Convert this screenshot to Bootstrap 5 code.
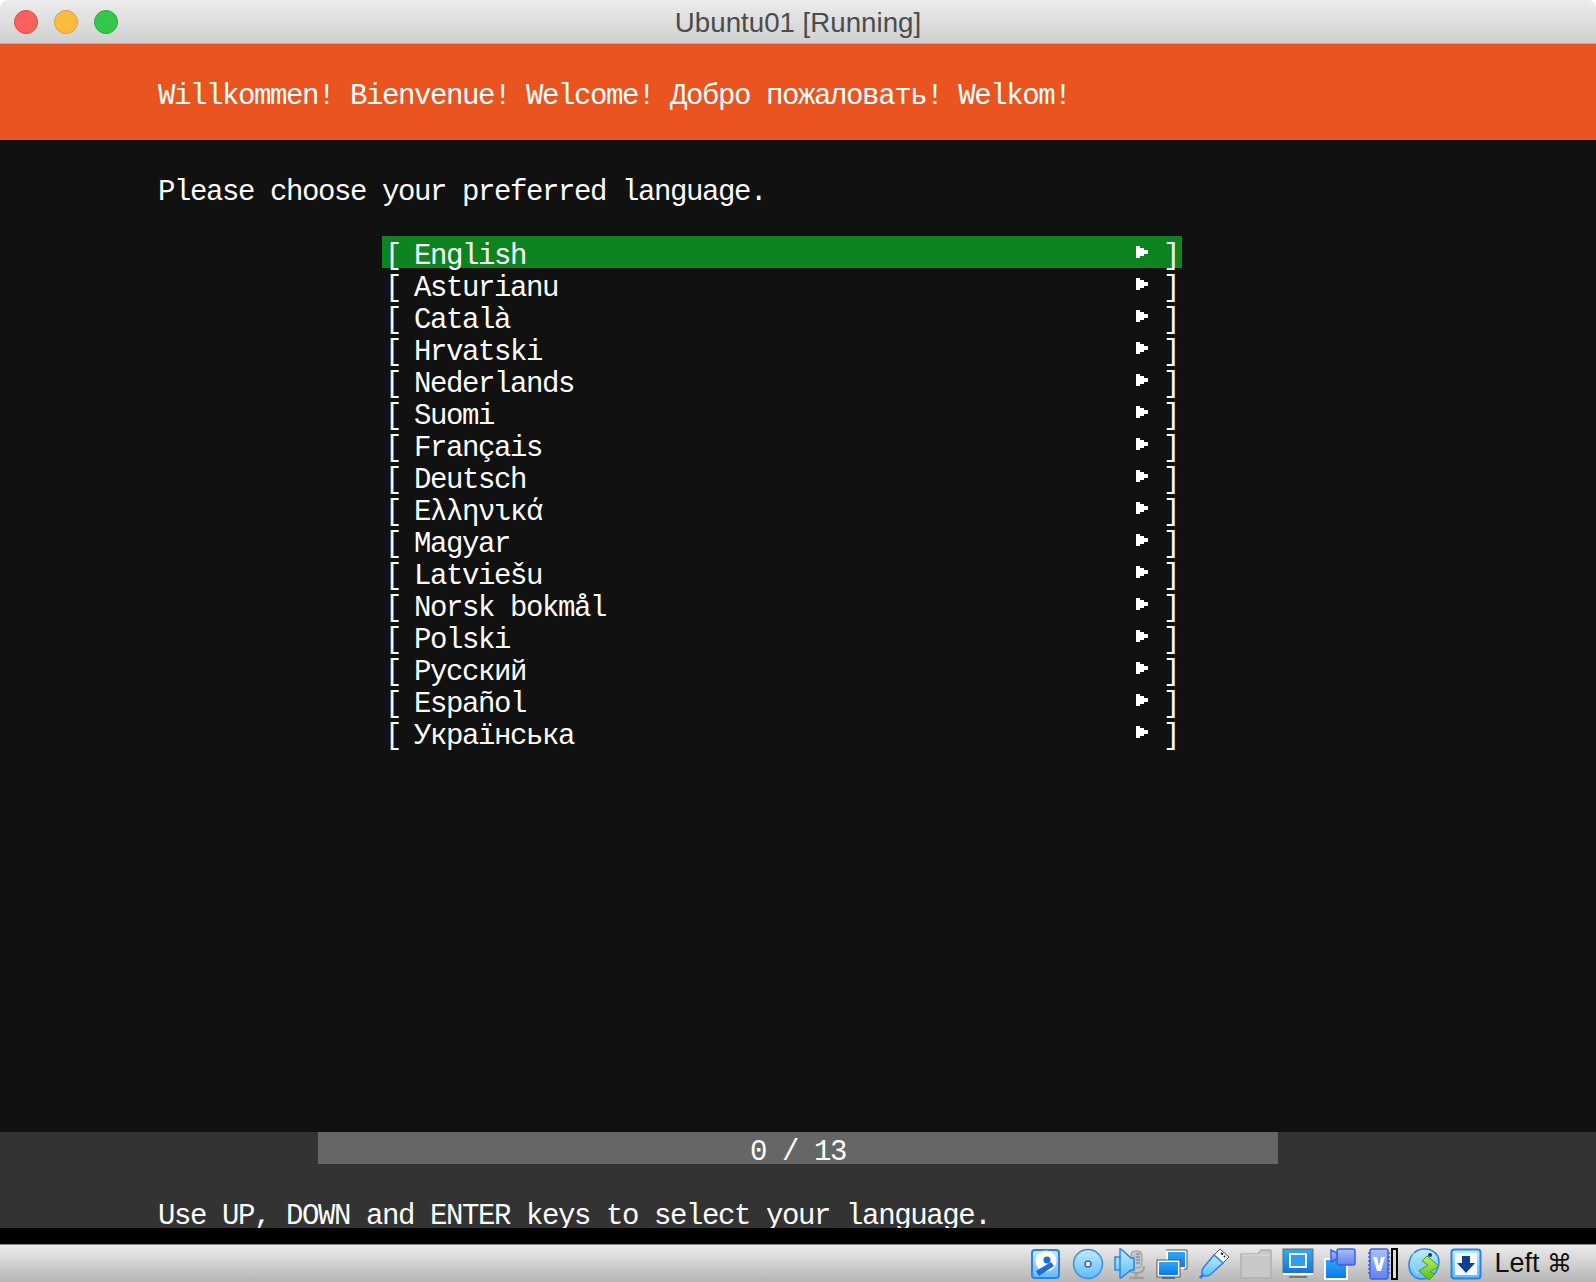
<!DOCTYPE html>
<html lang="en">
<head>
<meta charset="utf-8">
<title>Ubuntu01 [Running]</title>
<link rel="stylesheet" href="https://cdn.jsdelivr.net/npm/bootstrap@5.3.0/dist/css/bootstrap.min.css">
<style>
html,body{height:100%;margin:0;background:#fff;overflow:hidden}
.vm-window{height:1282px}
.vm-title{height:44px;flex:none;background:linear-gradient(#ececec,#d0d0d0);border-bottom:1px solid #b4b4b4;border-radius:8px 8px 0 0;padding-left:14px;gap:16px}
.vm-light{width:24px;height:24px;border-radius:50%;border:1px solid;flex:none}
.vm-red{background:#fc615d;border-color:#df4744}
.vm-yellow{background:#fdbc40;border-color:#de9f34}
.vm-green{background:#34c84a;border-color:#27aa35}
.vm-caption{left:0;right:0;top:0;font:27.7px/46px "Liberation Sans",Arial,sans-serif;color:#4c4c4c;text-align:center}
.vm-term{font-family:"Liberation Mono",monospace;font-size:29px;letter-spacing:-1.4px;line-height:42px;color:#fff;white-space:nowrap}
.vm-banner{height:96px;flex:none;background:#e95420;padding:32px 0 0 158px;overflow:hidden}
.vm-main{height:992px;flex:none;background:#111;padding:32px 0 0 158px}
.vm-prompt{height:64px}
.vm-list{width:800px;margin:0 0 0 224px;padding:0;list-style:none}
.vm-row{height:32px}
.vm-row.vm-on{background:#0e8420}
.vm-open{width:32px;padding-left:3px;flex:none}
.vm-close{margin-right:3px}
.vm-arrow{width:16px;height:32px;margin-right:13px;flex:none;display:block}
.vm-name{flex:1}
.vm-foot{height:96px;flex:none;background:#333;overflow:hidden}
.vm-progress{width:960px;height:32px;margin-left:318px;background:#666;text-align:center}
.vm-help{padding:32px 0 0 158px}
.vm-gap{height:16px;flex:none;background:#000}
.vm-status{height:38px;flex:none;background:linear-gradient(#ececec,#b6b6b6);border-top:1px solid #8a8a8a;padding-right:24px;gap:10px}
.vm-status svg{width:32px;height:32px;flex:none;display:block}
.vm-key{font:27px/32px "Liberation Sans",Arial,sans-serif;color:#111;margin-left:2px;white-space:nowrap}
.vm-keyglyph{font-family:"DejaVu Sans",sans-serif;font-size:25px}
</style>
</head>
<body>
<svg width="0" height="0" class="position-absolute">
<defs>
<linearGradient id="gSky" x1="0" y1="0" x2="0" y2="1"><stop offset="0" stop-color="#c4ecff"/><stop offset="1" stop-color="#5cbcfb"/></linearGradient>
<linearGradient id="gScreen" x1="0" y1="0" x2="0" y2="1"><stop offset="0" stop-color="#30aaf6"/><stop offset="1" stop-color="#0a78e6"/></linearGradient>
<linearGradient id="gPurple" x1="0" y1="0" x2="0" y2="1"><stop offset="0" stop-color="#a8c0ff"/><stop offset="1" stop-color="#5f80ee"/></linearGradient>
<linearGradient id="gLime" x1="0" y1="0" x2="0" y2="1"><stop offset="0" stop-color="#b8f060"/><stop offset="1" stop-color="#58c020"/></linearGradient>
</defs>
</svg>
<div class="vm-window d-flex flex-column">
  <div class="vm-title d-flex align-items-center position-relative">
    <span class="vm-light vm-red"></span><span class="vm-light vm-yellow"></span><span class="vm-light vm-green"></span>
    <div class="vm-caption position-absolute">Ubuntu01 [Running]</div>
  </div>
  <div class="vm-banner vm-term">Willkommen! Bienvenue! Welcome! Добро пожаловать! Welkom!</div>
  <div class="vm-main vm-term">
    <div class="vm-prompt">Please choose your preferred language.</div>
    <ul class="vm-list">
      <li class="vm-row vm-on d-flex"><span class="vm-open">[</span><span class="vm-name">English</span><svg class="vm-arrow" viewBox="0 0 16 32"><path fill="#fff" d="M2 10h4v2h4v2h4v4h-4v2h-4v2h-4z"/></svg><span class="vm-close">]</span></li>
      <li class="vm-row d-flex"><span class="vm-open">[</span><span class="vm-name">Asturianu</span><svg class="vm-arrow" viewBox="0 0 16 32"><path fill="#fff" d="M2 10h4v2h4v2h4v4h-4v2h-4v2h-4z"/></svg><span class="vm-close">]</span></li>
      <li class="vm-row d-flex"><span class="vm-open">[</span><span class="vm-name">Català</span><svg class="vm-arrow" viewBox="0 0 16 32"><path fill="#fff" d="M2 10h4v2h4v2h4v4h-4v2h-4v2h-4z"/></svg><span class="vm-close">]</span></li>
      <li class="vm-row d-flex"><span class="vm-open">[</span><span class="vm-name">Hrvatski</span><svg class="vm-arrow" viewBox="0 0 16 32"><path fill="#fff" d="M2 10h4v2h4v2h4v4h-4v2h-4v2h-4z"/></svg><span class="vm-close">]</span></li>
      <li class="vm-row d-flex"><span class="vm-open">[</span><span class="vm-name">Nederlands</span><svg class="vm-arrow" viewBox="0 0 16 32"><path fill="#fff" d="M2 10h4v2h4v2h4v4h-4v2h-4v2h-4z"/></svg><span class="vm-close">]</span></li>
      <li class="vm-row d-flex"><span class="vm-open">[</span><span class="vm-name">Suomi</span><svg class="vm-arrow" viewBox="0 0 16 32"><path fill="#fff" d="M2 10h4v2h4v2h4v4h-4v2h-4v2h-4z"/></svg><span class="vm-close">]</span></li>
      <li class="vm-row d-flex"><span class="vm-open">[</span><span class="vm-name">Français</span><svg class="vm-arrow" viewBox="0 0 16 32"><path fill="#fff" d="M2 10h4v2h4v2h4v4h-4v2h-4v2h-4z"/></svg><span class="vm-close">]</span></li>
      <li class="vm-row d-flex"><span class="vm-open">[</span><span class="vm-name">Deutsch</span><svg class="vm-arrow" viewBox="0 0 16 32"><path fill="#fff" d="M2 10h4v2h4v2h4v4h-4v2h-4v2h-4z"/></svg><span class="vm-close">]</span></li>
      <li class="vm-row d-flex"><span class="vm-open">[</span><span class="vm-name">Ελληνικά</span><svg class="vm-arrow" viewBox="0 0 16 32"><path fill="#fff" d="M2 10h4v2h4v2h4v4h-4v2h-4v2h-4z"/></svg><span class="vm-close">]</span></li>
      <li class="vm-row d-flex"><span class="vm-open">[</span><span class="vm-name">Magyar</span><svg class="vm-arrow" viewBox="0 0 16 32"><path fill="#fff" d="M2 10h4v2h4v2h4v4h-4v2h-4v2h-4z"/></svg><span class="vm-close">]</span></li>
      <li class="vm-row d-flex"><span class="vm-open">[</span><span class="vm-name">Latviešu</span><svg class="vm-arrow" viewBox="0 0 16 32"><path fill="#fff" d="M2 10h4v2h4v2h4v4h-4v2h-4v2h-4z"/></svg><span class="vm-close">]</span></li>
      <li class="vm-row d-flex"><span class="vm-open">[</span><span class="vm-name">Norsk bokmål</span><svg class="vm-arrow" viewBox="0 0 16 32"><path fill="#fff" d="M2 10h4v2h4v2h4v4h-4v2h-4v2h-4z"/></svg><span class="vm-close">]</span></li>
      <li class="vm-row d-flex"><span class="vm-open">[</span><span class="vm-name">Polski</span><svg class="vm-arrow" viewBox="0 0 16 32"><path fill="#fff" d="M2 10h4v2h4v2h4v4h-4v2h-4v2h-4z"/></svg><span class="vm-close">]</span></li>
      <li class="vm-row d-flex"><span class="vm-open">[</span><span class="vm-name">Русский</span><svg class="vm-arrow" viewBox="0 0 16 32"><path fill="#fff" d="M2 10h4v2h4v2h4v4h-4v2h-4v2h-4z"/></svg><span class="vm-close">]</span></li>
      <li class="vm-row d-flex"><span class="vm-open">[</span><span class="vm-name">Español</span><svg class="vm-arrow" viewBox="0 0 16 32"><path fill="#fff" d="M2 10h4v2h4v2h4v4h-4v2h-4v2h-4z"/></svg><span class="vm-close">]</span></li>
      <li class="vm-row d-flex"><span class="vm-open">[</span><span class="vm-name">Українська</span><svg class="vm-arrow" viewBox="0 0 16 32"><path fill="#fff" d="M2 10h4v2h4v2h4v4h-4v2h-4v2h-4z"/></svg><span class="vm-close">]</span></li>
    </ul>
  </div>
  <div class="vm-foot vm-term">
    <div class="vm-progress">0 / 13</div>
    <div class="vm-help">Use UP, DOWN and ENTER keys to select your language.</div>
  </div>
  <div class="vm-gap"></div>
  <div class="vm-status d-flex align-items-center justify-content-end">
    <!-- hard disk -->
    <svg viewBox="0 0 32 32"><rect x="2" y="2" width="27" height="28" rx="3" fill="url(#gSky)" stroke="#2a82e8" stroke-width="2"/><circle cx="16" cy="13" r="10.500" fill="#fff"/><circle cx="17" cy="12" r="3.500" fill="#1f6fd0"/><path d="M21 14 6 23l3 5 15-10z" fill="#1f6fd0"/></svg>
    <!-- optical disc -->
    <svg viewBox="0 0 32 32"><circle cx="16" cy="16" r="14.5" fill="url(#gSky)" stroke="#3a8ee8" stroke-width="1.5"/><circle cx="16" cy="16" r="3" fill="#d8f2ff" stroke="#4a6a90" stroke-width="1.5"/></svg>
    <!-- audio -->
    <svg viewBox="0 0 32 32"><rect x="17" y="3" width="11" height="17" rx="4" fill="#c6c6c6" stroke="#999"/><path d="M22 6h4M22 9h4M22 12h4M22 15h4" stroke="#777" fill="none"/><path d="M14 17c0 6 4 8 9 8s7-3 7-7" fill="none" stroke="#a0a0a0" stroke-width="2"/><path d="M22 25v4M15 30h15" stroke="#a0a0a0" stroke-width="2.5"/><path d="M1 9h5V1h1l10 9h3v12h-3L7 30H6v-8H1z" fill="url(#gSky)" stroke="#2a82e8" stroke-width="1.5"/><path d="M6 9v13" stroke="#2a82e8" stroke-width="1.5"/></svg>
    <!-- network -->
    <svg viewBox="0 0 32 32"><path d="M11 3h19v17H11z" fill="url(#gScreen)" stroke="#fff" stroke-width="2"/><path d="M10 2h21v19h-3" fill="none" stroke="#555" stroke-width="1"/><rect x="2" y="13" width="21" height="15" fill="url(#gScreen)" stroke="#fff" stroke-width="2"/><rect x="1" y="12" width="23" height="17" fill="none" stroke="#555"/><path d="M6 30h13" stroke="#666" stroke-width="2"/></svg>
    <!-- usb -->
    <svg viewBox="0 0 32 32"><path d="m22 1 9 8-6 6-9-8z" fill="#fff" stroke="#555"/><path d="m23 5 2 1.500M26 8l1 1" stroke="#222" stroke-width="2"/><path d="M16 7 25 15 13 26c-2 2-6 3-8 1s-1-6 1-8z" fill="url(#gSky)" stroke="#2a82e8" stroke-width="1.500"/><path d="M5 27 2 30" stroke="#2a82e8" stroke-width="3"/></svg>
    <!-- shared folder -->
    <svg viewBox="0 0 32 32"><path d="M1 6h17l3-4h9q1 0 1 1v27H1z" fill="#c8c8c8" stroke="#b0b0b0" stroke-width="1.500"/><path d="M2 7h28" stroke="#dcdcdc"/></svg>
    <!-- display -->
    <svg viewBox="0 0 32 32"><rect x="1" y="1" width="30" height="24" fill="url(#gScreen)" stroke="#666"/><rect x="8" y="6" width="16" height="13" fill="#2f9df3" stroke="#fff" stroke-width="2"/><rect x="1" y="25" width="30" height="2" fill="#fff"/><path d="M7 28h18v2H7z" fill="#777"/></svg>
    <!-- capture -->
    <svg viewBox="0 0 32 32"><rect x="1" y="11" width="22" height="20" fill="url(#gScreen)" stroke="#fff" stroke-width="2"/><rect x="13" y="1" width="18" height="16" rx="2" fill="url(#gPurple)" stroke="#3f62d8" stroke-width="1.500"/><path d="M13 5 7 2v12l6-3z" fill="url(#gPurple)" stroke="#3f62d8" stroke-width="1.500"/></svg>
    <!-- cpu + indicator -->
    <svg viewBox="0 0 32 32"><path d="M2 5h2M2 9h2M2 13h2M2 17h2M2 21h2M2 25h2M22 5h2M22 9h2M22 13h2M22 17h2M22 21h2M22 25h2" stroke="#3f62d8" stroke-width="1.500"/><rect x="4" y="1" width="18" height="30" rx="2" fill="url(#gPurple)" stroke="#3f62d8" stroke-width="1.500"/><path d="M7 9h4l2 9 2-9h4l-4 14h-4z" fill="#fff"/><rect x="26" y="1" width="5" height="30" fill="#d8d8d8" stroke="#000" stroke-width="2"/></svg>
    <!-- guest additions -->
    <svg viewBox="0 0 32 32"><path d="M15 1C6 2 1 9 1 17s5 14 13 14c9 0 17-7 17-17C31 6 24 0 15 1z" fill="url(#gSky)" stroke="#2a82e8" stroke-width="1.500"/><path d="M6 5c-3 6-2 15 4 21" fill="none" stroke="#a0dcff" stroke-width="1.500"/><circle cx="22" cy="7" r="2" fill="#0b3a70"/><path d="m19 8 12 10-9 6 5 2-6 6-10-9 9-6-6-4z" fill="url(#gLime)" stroke="#4a9a18"/></svg>
    <!-- download -->
    <svg viewBox="0 0 32 32"><rect x="1.500" y="1.500" width="29" height="29" rx="3" fill="url(#gSky)" stroke="#2a82e8" stroke-width="2"/><rect x="5" y="5" width="22" height="22" fill="#f4fbff"/><path d="M12 8h8v7h5L16 25 7 15h5z" fill="#0c3f8e"/></svg>
    <div class="vm-key">Left <span class="vm-keyglyph">⌘</span></div>
  </div>
</div>
<script src="https://cdn.jsdelivr.net/npm/bootstrap@5.3.0/dist/js/bootstrap.bundle.min.js"></script>
</body>
</html>
